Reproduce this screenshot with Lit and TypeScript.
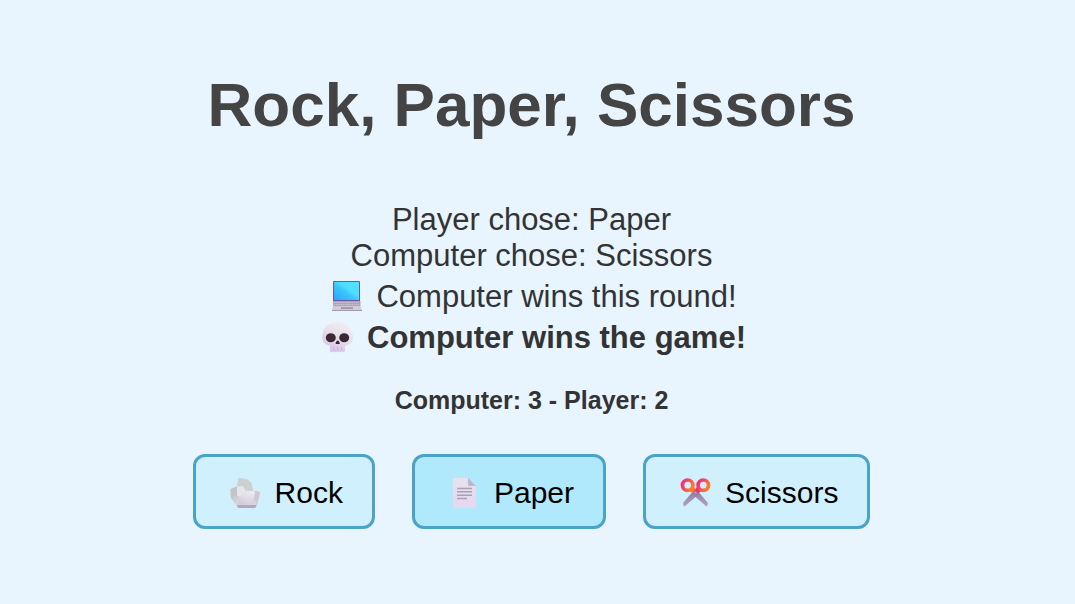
import { LitElement, html, css } from "lit";
import { customElement, state } from "lit/decorators.js";

const laptop = html`<svg class="icon" viewBox="0 1 32 32" aria-hidden="true">
  <defs>
    <linearGradient id="screen" x1="0" y1="1" x2="1" y2="0">
      <stop offset="0" stop-color="#2aa4f8" /><stop offset=".45" stop-color="#3cc6fc" /><stop offset=".6" stop-color="#50e0ff" /><stop offset="1" stop-color="#50e2ff" />
    </linearGradient>
  </defs>
  <rect x="3" y="1" width="27" height="21" rx="1" fill="#6a5aa6" />
  <rect x="4" y="2" width="25" height="18" fill="url(#screen)" />
  <path d="M3 21h27.500v5H3z" fill="#aaa4b6" />
  <path d="M4 22.500h25M4 24.500h25" stroke="#c9c3d3" stroke-width="1" stroke-dasharray="1.5 .7" />
  <path d="M3 26h27.500l1.500 4.500H2z" fill="#d2cadb" />
  <path d="M2 30h30v1H2z" fill="#a29aae" />
  <path d="M11 27.200h12v1.800H11z" fill="#9c94a8" />
</svg>`;

const skull = html`<svg class="icon" viewBox="0 1 32 32" aria-hidden="true">
  <defs>
    <linearGradient id="bone" x1=".7" y1="0" x2=".2" y2="1">
      <stop offset="0" stop-color="#f3eef2" /><stop offset=".5" stop-color="#e6dce8" /><stop offset="1" stop-color="#dcbdec" />
    </linearGradient>
  </defs>
  <path d="M16.500 1C8 1 1 7.500 1 16c0 4.500 2.500 7.600 6.500 8.200 1 .2 1.500.8 1.500 1.800v4c0 1.800 3.500 1.800 3.800 0 .3 1.800 3.600 1.800 3.900 0 .3 1.800 3.600 1.800 3.900 0 .3 1.500 3.400 1.500 3.400-.5V26c0-1 .5-1.600 1.500-1.800C29.500 23.600 32 20.500 32 16 32 7.500 25 1 16.500 1z" fill="url(#bone)" />
  <path d="M12.800 26v4M16.700 26v4M20.600 26v4" stroke="#c9a8dc" stroke-width=".8" />
  <ellipse cx="9.800" cy="16.800" rx="5" ry="4.500" fill="#392936" />
  <ellipse cx="23.200" cy="16.800" rx="5" ry="4.500" fill="#392936" />
  <path d="M16.700 19.500c-1.200 0-2.600 2.900-1.800 3.600h3.600c.8-.7-.6-3.600-1.800-3.600z" fill="#392936" />
</svg>`;

const rock = html`<svg class="icon" viewBox="0 0 32 32" aria-hidden="true">
  <defs>
    <linearGradient id="face" x1=".7" y1="0" x2=".2" y2="1">
      <stop offset="0" stop-color="#edebf2" /><stop offset="1" stop-color="#cfc9d8" />
    </linearGradient>
    <linearGradient id="lower" x1="0" y1="0" x2="1" y2="1">
      <stop offset="0" stop-color="#c3c3c7" /><stop offset="1" stop-color="#dddbe1" />
    </linearGradient>
  </defs>
  <path d="M9.500 1l4 .500 6 1.500 3 3.500 1.500 7 7 1.500-1 5-2 8-2 2.500H9L8 29l-6-8-.500-9L8 9.500z" fill="#d6d5da" />
  <path d="M9.500 1l4 .500 6 1.500 3 3.500 1.500 7-7.500 0-2.500-4.500L8 9.500z" fill="#ccd0d0" />
  <path d="M8 9.500l6-.5 2.500 4.500L18 14l-8 6-2-2z" fill="#e4e6e8" />
  <path d="M1.500 12L8 9.500V18l-6 3z" fill="#c1c4c5" />
  <path d="M2 21l6-3 2 2-1 8-1 1z" fill="url(#lower)" />
  <path d="M10 20l8-6h6l3 1-4 8-4 4.500L8.500 28z" fill="url(#face)" />
  <path d="M26 14l5 1-1 5-2 8-3-6z" fill="#ccc9d1" />
  <path d="M8 28l11-1 6-5 3 6z" fill="#dad4e0" />
  <path d="M8 28h20l-2 3H9z" fill="#b2a9ba" />
</svg>`;

const paper = html`<svg class="icon" viewBox="0 0 32 32" aria-hidden="true">
  <defs>
    <linearGradient id="sheet" x1="0" y1="0" x2="0" y2="1">
      <stop offset="0" stop-color="#e6e2ee" /><stop offset="1" stop-color="#e6d7ef" />
    </linearGradient>
  </defs>
  <path d="M6 1h14l8 8v21a1 1 0 0 1-1 1H6a1 1 0 0 1-1-1V2a1 1 0 0 1 1-1z" fill="url(#sheet)" />
  <path d="M20 1l8 8h-7a1 1 0 0 1-1-1z" fill="#beb8c6" />
  <path d="M9 11.500h15M9 14.800h15M9 18.200h15M9 21.500h10" stroke="#aaa1b5" stroke-width="1.400" />
</svg>`;

const scissors = html`<svg class="icon" viewBox="0 0 32 32" aria-hidden="true">
  <defs>
    <linearGradient id="grip" x1="0" y1="0" x2="1" y2=".5">
      <stop offset="0" stop-color="#f7267e" /><stop offset=".5" stop-color="#fb4a5d" /><stop offset="1" stop-color="#ff7a25" />
    </linearGradient>
    <linearGradient id="blade" x1="0" y1="0" x2="0" y2="1">
      <stop offset="0" stop-color="#8c7a9c" /><stop offset="1" stop-color="#b4a0c8" />
    </linearGradient>
  </defs>
  <path d="M17.500 12.500l10.800 12.700c1 1.500.5 3.300-.8 4.300L13 17z" fill="url(#blade)" />
  <path d="M15.500 12.500L4.700 25.200c-1 1.500-.5 3.300.8 4.300L20 17z" fill="url(#blade)" />
  <path d="M11 14l3.500-5 4 6.500-3 2.500z" fill="#ff6f38" />
  <path d="M22 14l-3.500-5-4 6.500 3 2.500z" fill="#ee2d78" />
  <circle cx="8.700" cy="8.200" r="5.200" fill="none" stroke="url(#grip)" stroke-width="3.700" />
  <circle cx="24.300" cy="8.200" r="5.200" fill="none" stroke="url(#grip)" stroke-width="3.700" />
  <path d="M16.500 13.500l3.500 3.500-3.500 3-3.500-3z" fill="#9382a3" />
  <circle cx="16.500" cy="15.800" r=".8" fill="#b9aac4" />
</svg>`;

@customElement("app-root")
export class AppRoot extends LitElement {
  static styles = css`
    :host {
      display: block;
      min-height: 100vh;
      box-sizing: border-box;
      padding: 68px 12px 0 0;
      background: #e8f5ff;
      color: #333;
      font-family: "Liberation Sans", Arial, sans-serif;
      text-align: center;
    }
    .title {
      margin: 0 0 60px;
      font-size: 62px;
      line-height: 74px;
      color: #444;
    }
    .result {
      font-size: 31px;
      line-height: 36px;
    }
    .line {
      margin: 0;
    }
    .outcome {
      display: flex;
      justify-content: center;
      align-items: center;
      gap: 14px;
      padding-left: 4px;
      line-height: 41px;
    }
    .outcomes {
      padding-top: 2px;
    }
    .final {
      font-weight: bold;
    }
    .score {
      margin: 28px 0 40px;
      font-size: 25px;
      line-height: 28px;
      font-weight: bold;
    }
    .choices {
      display: flex;
      justify-content: center;
      gap: 37px;
    }
    .choice {
      display: flex;
      align-items: center;
      gap: 14px;
      padding: 17px 29px 15px 33px;
      border: 3px solid #4ba3c7;
      border-radius: 12px;
      background: #d0f0fd;
      color: #000;
      font: inherit;
      font-size: 30px;
      line-height: 37px;
      cursor: pointer;
    }
    .choice:hover,
    .choice.active {
      background: #b0e8fc;
    }
    .icon {
      width: 32px;
      height: 32px;
      flex: none;
    }
  `;

  @state() private picked = "Paper";
  private computer = "Scissors";

  private options = [
    { name: "Rock", icon: rock },
    { name: "Paper", icon: paper },
    { name: "Scissors", icon: scissors },
  ];

  render() {
    return html`
      <h1 class="title">Rock, Paper, Scissors</h1>
      <section class="result">
        <p class="line">Player chose: ${this.picked}</p>
        <p class="line">Computer chose: ${this.computer}</p>
        <div class="outcomes">
          <p class="line outcome">${laptop}<span>Computer wins this round!</span></p>
          <p class="line outcome final">${skull}<span>Computer wins the game!</span></p>
        </div>
      </section>
      <p class="score">Computer: 3 - Player: 2</p>
      <div class="choices">
        ${this.options.map(
          (o) => html`<button
            type="button"
            class="choice ${o.name === this.picked ? "active" : ""}"
            @click=${() => (this.picked = o.name)}
          >${o.icon}<span>${o.name}</span></button>`
        )}
      </div>
    `;
  }
}
